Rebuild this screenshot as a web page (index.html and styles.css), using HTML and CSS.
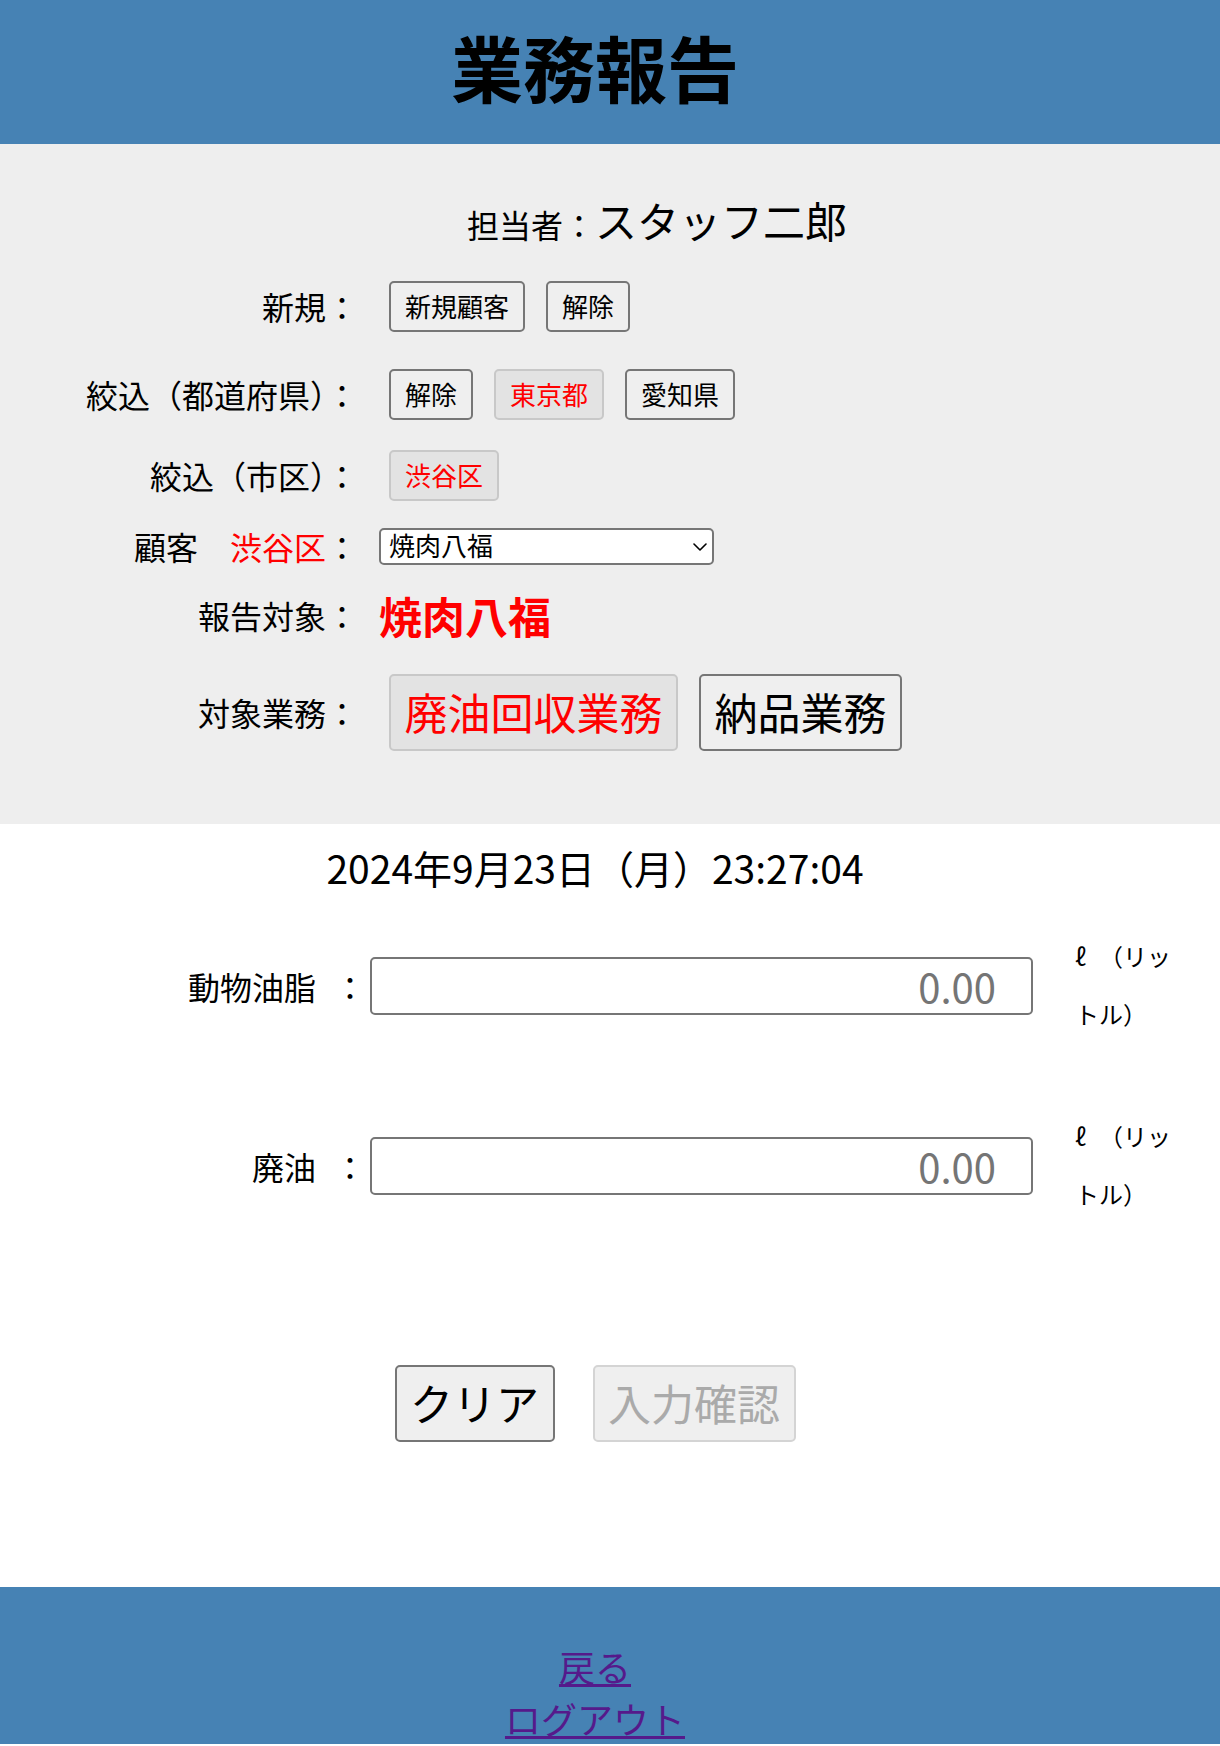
FILE: index.html
```html
<!DOCTYPE html>
<html lang="ja">
<head>
<meta charset="utf-8">
<title>業務報告</title>
<link rel="stylesheet" href="styles.css">
</head>
<body>
<header class="site-header">
  <h1 class="title">業務報告</h1>
</header>

<section class="panel">
  <div class="staff"><span class="staff-label">担当者：</span><span class="staff-name">スタッフ二郎</span></div>

  <div class="row row-new">
    <div class="label">新規：</div>
    <div class="controls">
      <button class="btn" type="button">新規顧客</button>
      <button class="btn" type="button">解除</button>
    </div>
  </div>

  <div class="row row-pref">
    <div class="label">絞込（都道府県）：</div>
    <div class="controls">
      <button class="btn" type="button">解除</button>
      <button class="btn is-active" type="button">東京都</button>
      <button class="btn" type="button">愛知県</button>
    </div>
  </div>

  <div class="row row-city">
    <div class="label">絞込（市区）：</div>
    <div class="controls">
      <button class="btn is-active" type="button">渋谷区</button>
    </div>
  </div>

  <div class="row row-customer">
    <div class="label">顧客　<span class="red">渋谷区</span>：</div>
    <div class="field select-wrap">
      <select class="customer-select">
        <option>焼肉八福</option>
      </select>
      <svg class="select-arrow" viewBox="0 0 14 8" aria-hidden="true"><polyline points="1,1 7,7 13,1" fill="none" stroke="#000" stroke-width="1.6" stroke-linecap="round" stroke-linejoin="round"/></svg>
    </div>
  </div>

  <div class="row row-target">
    <div class="label">報告対象：</div>
    <div class="field target-name">焼肉八福</div>
  </div>

  <div class="row row-work">
    <div class="label">対象業務：</div>
    <div class="controls">
      <button class="btn btn-lg is-active" type="button">廃油回収業務</button>
      <button class="btn btn-lg" type="button">納品業務</button>
    </div>
  </div>
</section>

<main class="main">
  <div class="date">2024年9月23日（月）23:27:04</div>

  <div class="qty-row qty-first">
    <div class="qty-label">動物油脂</div>
    <div class="qty-colon">：</div>
    <input class="qty-input" type="text" placeholder="0.00">
    <div class="unit"><span class="liter">ℓ</span><span class="unit-text">（リッ</span><br><span class="unit-text">トル）</span></div>
  </div>

  <div class="qty-row qty-second">
    <div class="qty-label">廃油</div>
    <div class="qty-colon">：</div>
    <input class="qty-input" type="text" placeholder="0.00">
    <div class="unit"><span class="liter">ℓ</span><span class="unit-text">（リッ</span><br><span class="unit-text">トル）</span></div>
  </div>

  <div class="actions">
    <button class="btn btn-lg" type="button">クリア</button>
    <button class="btn btn-lg" type="button" disabled>入力確認</button>
  </div>
</main>

<footer class="site-footer">
  <div><a href="#back" class="footer-link">戻る</a></div>
  <div><a href="#logout" class="footer-link">ログアウト</a></div>
</footer>
</body>
</html>
```

FILE: styles.css
```css
* {
  box-sizing: border-box;
}

html, body {
  margin: 0;
  padding: 0;
}

body {
  font-family: "Noto Sans CJK JP", "Noto Sans", sans-serif;
  color: #000;
  background: #fff;
}

/* Header */
.site-header {
  background: #4682b4;
  height: 144px;
  padding: 30px 30px 0 0;
  text-align: center;
}

.title {
  margin: 0;
  font-size: 72px;
  font-weight: 700;
  line-height: 1;
}

/* Filter panel */
.panel {
  background: #eeeeee;
  padding: 55px 0 73px;
}

.staff {
  padding-left: 467px;
  font-size: 32px;
  line-height: 1;
}

.staff-name {
  font-size: 42px;
}

.row {
  display: flex;
  align-items: center;
}

.row-new { margin-top: 40px; }
.row-pref { margin-top: 37px; }
.row-city { margin-top: 30px; }
.row-customer { margin-top: 27px; }
.row-target { margin-top: 29px; }
.row-work { margin-top: 37px; }

.label {
  flex: none;
  width: 358px;
  text-align: right;
  font-size: 32px;
  line-height: 1;
  position: relative;
  top: -1px;
}

.red {
  color: #ff0000;
}

.controls {
  display: flex;
  align-items: center;
  gap: 21px;
  padding-left: 31px;
}

.field {
  padding-left: 21px;
}

.select-wrap {
  position: relative;
}

.customer-select {
  -webkit-appearance: none;
  appearance: none;
  display: block;
  width: 335px;
  height: 37px;
  font-family: inherit;
  font-size: 26px;
  line-height: 29px;
  color: #000;
  background-color: #fff;
  border: 2px solid #767676;
  border-radius: 5px;
  padding: 0 30px 4px 8px;
  margin: 0;
}

.select-arrow {
  position: absolute;
  right: 7px;
  top: 15px;
  width: 14px;
  height: 8px;
  pointer-events: none;
}

.target-name {
  font-size: 43px;
  font-weight: 700;
  line-height: 1;
  color: #ff0000;
}

/* Buttons */
.btn {
  font-family: inherit;
  font-size: 26px;
  line-height: 37px;
  padding: 4px 14px 6px;
  border: 2px solid #767676;
  border-radius: 5px;
  background: #efefef;
  color: #000;
  margin: 0;
}

.btn.is-active {
  background: #e3e3e3;
  border-color: #c8c8c8;
  color: #ff0000;
}

.btn-lg {
  font-size: 43px;
  line-height: 61px;
  padding: 5px 13.5px 7px;
}

.btn:disabled {
  background: #efefef;
  border-color: #d4d4d4;
  color: #aaaaaa;
}

/* Main */
.date {
  margin: 16px 30px 0 0;
  text-align: center;
  font-size: 39px;
  line-height: 54px;
}

.qty-row {
  display: flex;
  align-items: center;
  height: 104px;
  font-size: 36px;
}

.qty-first { margin-top: 40px; }
.qty-second { margin-top: 76px; }

.qty-label {
  flex: none;
  width: 316px;
  text-align: right;
  font-size: 32px;
  line-height: 1;
}

.qty-colon {
  flex: none;
  width: 54px;
  padding-right: 4px;
  text-align: right;
  font-size: 32px;
  line-height: 1;
}

.qty-input {
  flex: none;
  width: 663px;
  height: 58px;
  border: 2px solid #767676;
  border-radius: 5px;
  font-family: inherit;
  font-size: 40px;
  text-align: right;
  padding: 0 35px 0 8px;
  background: #fff;
}

.qty-input::placeholder {
  color: #757575;
}

.unit {
  flex: none;
  width: 110px;
  margin-left: 42px;
  margin-bottom: 9px;
  font-size: 36px;
  line-height: 52px;
}

.unit-text {
  font-size: 24px;
}

.liter {
  display: inline-block;
  width: 24px;
  font-size: 24px;
  line-height: 1;
}

.actions {
  display: flex;
  justify-content: center;
  gap: 38px;
  margin-top: 147px;
  padding-right: 30px;
}

/* Footer */
.site-footer {
  background: #4682b4;
  margin-top: 145px;
  padding: 53px 30px 0 0;
  text-align: center;
  font-size: 36px;
  line-height: 52px;
}

.footer-link {
  color: #551a8b;
  text-decoration: underline;
}
```
